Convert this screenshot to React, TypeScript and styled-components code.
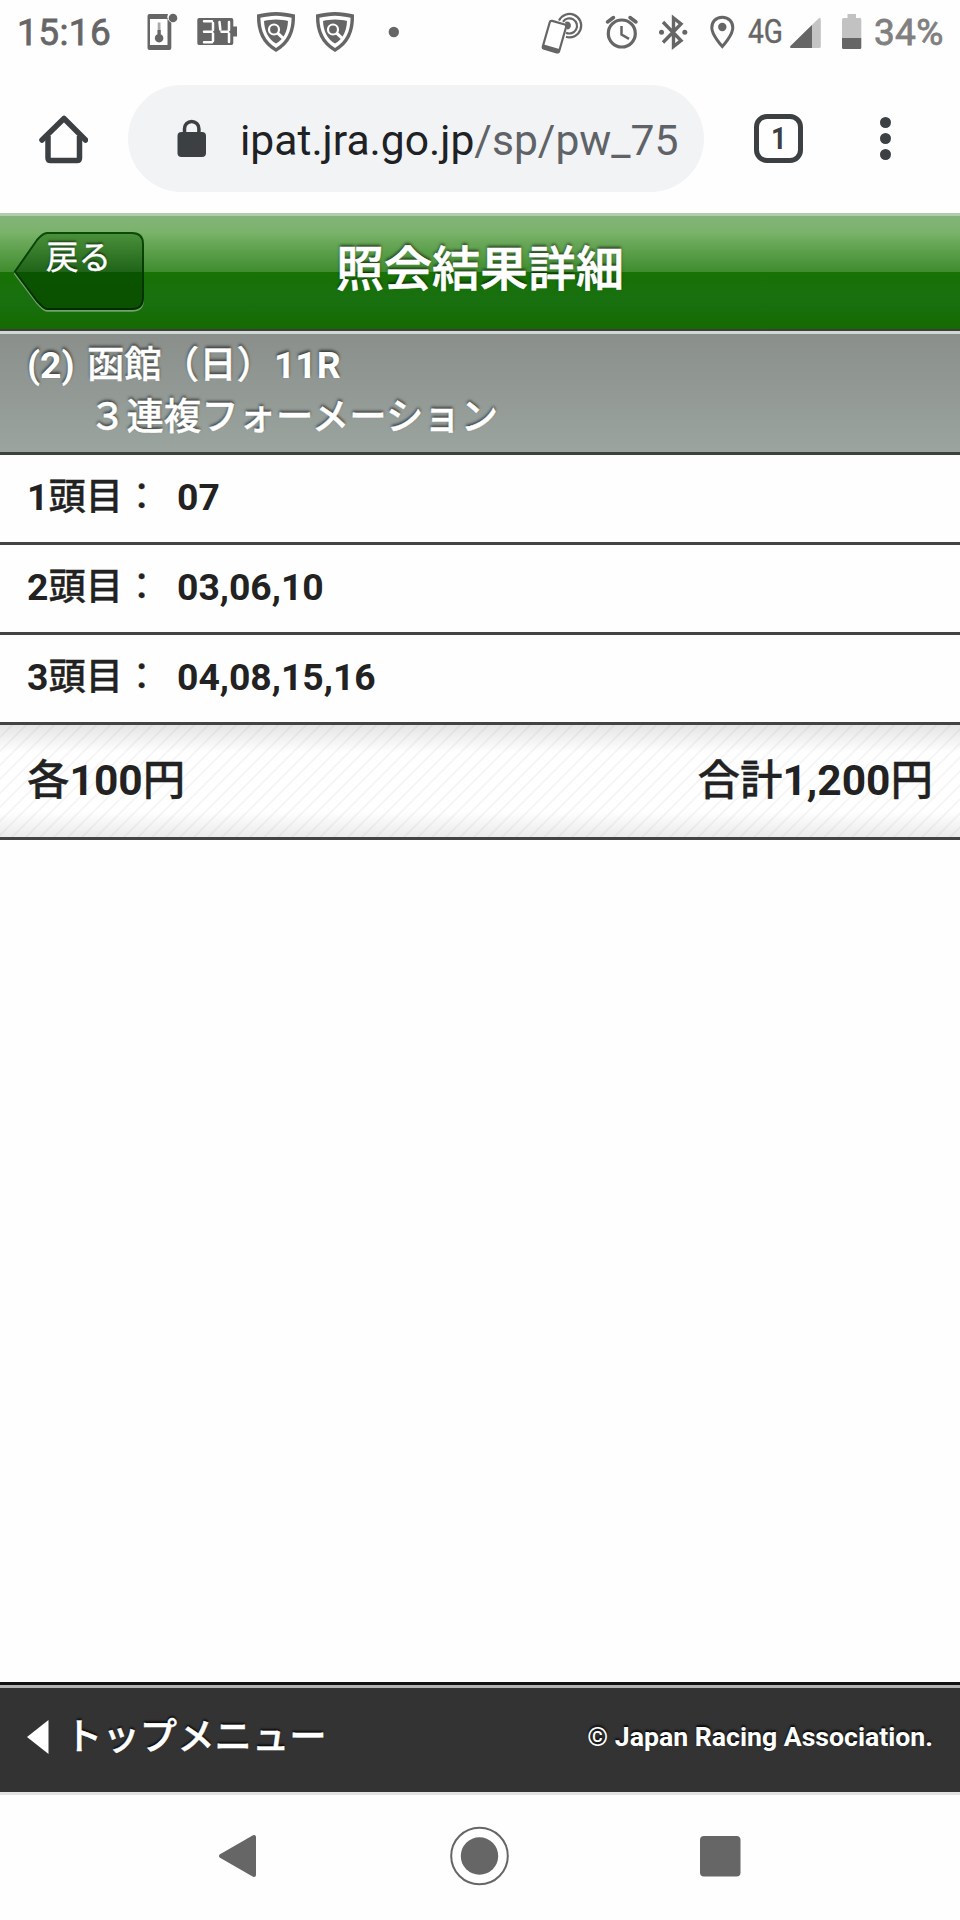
import React from "react";
import styled, { createGlobalStyle, css } from "styled-components";

const GlobalStyle = createGlobalStyle`
  * { box-sizing: border-box; }
  body { margin: 0; background: #fdfdfd; }
`;

const latin = `Roboto, "Noto Sans CJK JP", sans-serif`;

const Screen = styled.div`
  width: 960px;
  height: 1920px;
  display: flex;
  flex-direction: column;
  background: #fefefe;
  font-family: ${latin};
  color: #222;
  overflow: hidden;
`;

/* Japanese text: sits on the Latin baseline without growing the line */
const Jp = styled.span<{ $stroke?: number; $light?: boolean }>`
  font-family: "Noto Sans CJK JP", sans-serif;
  font-weight: ${(p) => (p.$light ? 400 : 500)};
  line-height: 0;
  ${(p) => p.$stroke && css`-webkit-text-stroke: ${p.$stroke}px currentColor;`}
`;

/* ---------- status bar ---------- */

const StatusBar = styled.header`
  height: 66px;
  display: flex;
  align-items: flex-start;
  padding-top: 10px;
  color: #666;
`;

const Clock = styled.span`
  flex: none;
  width: 147px;
  padding-left: 17px;
  font-size: 37px;
  line-height: 46px;
  letter-spacing: 0.4px;
  -webkit-text-stroke: 0.8px currentColor;
`;

const BatteryText = styled.span`
  margin-left: 12px;
  font-size: 37px;
  line-height: 46px;
  letter-spacing: 0.3px;
  color: #808080;
  -webkit-text-stroke: 0.8px currentColor;
`;

const Glyph = styled.svg<{ $gap?: number }>`
  flex: none;
  display: block;
  overflow: visible;
  margin-left: ${(p) => p.$gap ?? 0}px;
`;

const ShieldIcon = ({ gap }: { gap: number }) => (
  <Glyph $gap={gap} width="40" height="44" viewBox="0 0 40 44">
    <path d="M20 2 C26 2.2 32 3 39 4.6 C39.6 22 34 34 20 42 C6 34 .4 22 1 4.6 C8 3 14 2.2 20 2Z" fill="#666" />
    <path d="M20 5.8 C26 6 30 6.6 35.6 7.8 C35.4 21.5 31 31 20 38 C9 31 4.6 21.5 4.4 7.8 C10 6.6 14 6 20 5.8Z" fill="#fff" />
    <path d="M20 9.5 C25 9.6 28 10 32 10.9 C31.6 21 28 28.5 20 33.6 C12 28.5 8.4 21 8 10.9 C12 10 15 9.6 20 9.5Z" fill="#666" />
    <circle cx="18" cy="19.5" r="5" fill="none" stroke="#fff" strokeWidth="2.2" />
    <path d="M21.7 23.2 L27 28.2" stroke="#fff" strokeWidth="3" />
  </Glyph>
);

const Status = () => (
  <StatusBar>
    <Clock>15:16</Clock>
    <Glyph width="31" height="44" viewBox="147 10 31 44">
      <path d="M149.5 14 H168 A6.5 6.5 0 0 0 171.3 22.8 V48 Q171.3 50 169.5 50 H149.5 Q147.5 50 147.5 48 V16 Q147.5 14 149.5 14Z" fill="#666" />
      <rect x="150" y="19" width="17.5" height="26" fill="#fff" />
      <path d="M157.7 22.5 h2.8 v11 h-2.8z" fill="#aaa" />
      <path d="M157.5 30 h3.2 v4.2 a4.3 4.3 0 1 1 -3.2 0z" fill="#666" />
      <circle cx="173" cy="18" r="4.3" fill="#666" />
    </Glyph>
    <Glyph $gap={19} width="42" height="44" viewBox="197 10 42 44">
      <path d="M199 18 H231.5 Q233.3 18 233.3 20 V26.5 H237 V36.5 H233.3 V43 Q233.3 45 231.5 45 H199 Q197.3 45 197.3 43 V20 Q197.3 18 199 18Z" fill="#666" />
      <g stroke="#fff" strokeWidth="2.5" strokeLinecap="round">
        <path d="M204 21.3 H212 M204 31.8 H212 M204 42.3 H212 M213 23 V30 M213 33.5 V41" />
        <path d="M219.5 22 L220.3 29.5 M221.5 31.8 H228 M229 22 V30 M229 33.5 V42" />
      </g>
    </Glyph>
    <ShieldIcon gap={17} />
    <ShieldIcon gap={19} />
    <Glyph $gap={33} width="12" height="44" viewBox="388 10 12 44">
      <circle cx="393.8" cy="32" r="5.2" fill="#666" />
    </Glyph>
    <Glyph $gap={141} width="44" height="44" viewBox="541.5 10 44 44" fill="none">
      <g stroke="#666" strokeWidth="2.2">
        <path d="M559.5 20.5 A11.7 11.7 0 1 1 566.5 36.8" />
        <path d="M563.5 21.8 A7.6 7.6 0 1 1 566.5 32.7" />
      </g>
      <path d="M565.5 22 A4 4 0 1 1 567.5 29.5Z" fill="#666" />
      <g transform="rotate(16 554.5 36.5)">
        <rect x="546.5" y="22" width="17" height="29" rx="2" fill="#fff" stroke="#666" strokeWidth="2.2" />
        <rect x="546" y="47" width="18" height="4.5" rx="1" fill="#666" />
      </g>
    </Glyph>
    <Glyph $gap={20} width="33" height="44" viewBox="605 10 33 44" fill="none" stroke="#666">
      <circle cx="621.8" cy="33.5" r="13.5" strokeWidth="3.2" />
      <path d="M621.5 26 V34.5 L629 38.8" strokeWidth="2.5" />
      <path d="M607.5 22 L613.5 17.5 M636 22 L630 17.5" strokeWidth="3.5" strokeLinecap="round" />
    </Glyph>
    <Glyph $gap={20} width="31" height="44" viewBox="658 10 31 44" fill="none" stroke="#666">
      <path d="M663 22 L681 40.5 L673.5 46.5 V18 L681 24 L663 42.5" strokeWidth="3.4" />
      <circle cx="661.5" cy="32.3" r="2.5" fill="#666" stroke="none" />
      <circle cx="684.8" cy="32.3" r="2.5" fill="#666" stroke="none" />
    </Glyph>
    <Glyph $gap={21} width="25" height="44" viewBox="710 10 25 44">
      <path d="M722.3 17.3 C715.5 17.3 711.8 22 711.8 27.7 C711.8 35 722.3 46.5 722.3 46.5 C722.3 46.5 732.8 35 732.8 27.7 C732.8 22 729 17.3 722.3 17.3Z" fill="none" stroke="#666" strokeWidth="3" />
      <circle cx="722.3" cy="27" r="4.2" fill="#666" />
    </Glyph>
    <Glyph $gap={10} width="42" height="44" viewBox="745 10 42 44">
      <text x="748" y="43.2" fontSize="33" fill="#666" stroke="#666" strokeWidth=".4" fontFamily="Roboto, sans-serif" textLength="35" lengthAdjust="spacingAndGlyphs">4G</text>
    </Glyph>
    <Glyph $gap={3} width="32" height="44" viewBox="790 10 32 44">
      <path d="M791.5 48 Q789.5 48 790.5 46 L818.5 18.5 Q820.8 17 820.8 19.5 V46.5 Q820.8 48 819 48Z" fill="#c4c4c4" />
      <path d="M791.5 48 Q789.5 48 790.5 46 L812 25 V48Z" fill="#666" />
    </Glyph>
    <Glyph $gap={20} width="20" height="44" viewBox="842 10 20 44">
      <path d="M847.5 14 H856 V18 H860 Q861.3 18 861.3 20 V38 H842 V20 Q842 18 843.5 18 H847.5Z" fill="#c2c2c2" />
      <path d="M842 38 H861.3 V47.5 Q861.3 49 860 49 H843.5 Q842 49 842 47.5Z" fill="#666" />
    </Glyph>
    <BatteryText>34%</BatteryText>
  </StatusBar>
);

/* ---------- browser toolbar ---------- */

const Toolbar = styled.div`
  height: 147px;
  display: flex;
  align-items: center;
  padding: 0 60px 2px 39px;
`;

const AddressBar = styled.div`
  width: 576px;
  height: 107px;
  margin: 0 50px 0 40px;
  padding: 0 26px 0 49px;
  border-radius: 54px;
  background: #f1f3f4;
  display: flex;
  align-items: center;
`;

const Url = styled.div`
  flex: 1;
  margin: 3px 0 0 33px;
  overflow: hidden;
  white-space: nowrap;
  font-size: 42.6px;
  line-height: 56px;
  color: #5f6368;
`;

const Host = styled.span`
  color: #202124;
`;

const TabCount = styled.div`
  width: 49px;
  height: 49px;
  border: 5.5px solid #3c4043;
  border-radius: 13px;
  display: flex;
  align-items: center;
  justify-content: center;
  font-size: 31px;
  font-weight: 700;
  color: #3c4043;
  span { transform: scaleX(0.88); }
`;

const MenuDots = styled.div`
  margin-left: 77px;
  display: flex;
  flex-direction: column;
  gap: 5px;
`;

const Dot = styled.i`
  width: 11px;
  height: 11px;
  border-radius: 50%;
  background: #3c4043;
`;

/* ---------- page ---------- */

const PageHeader = styled.div`
  height: 118px;
  display: grid;
  grid-template-columns: 336px auto 336px;
  border-top: 3px solid #b0ccab;
  border-bottom: 2px solid #3d3d3d;
  background: linear-gradient(#82b37a 0, #7bb36b 16px, #67a656 28px, #3f8c2e 56px, #187204 56px, #187010 84px, #156b00 100%);
  color: #fff;
`;

const BackButton = styled.a`
  position: relative;
  width: 132px;
  height: 80px;
  margin: 16px 0 0 13px;
  padding-left: 33px;
  font-size: 32.5px;
  line-height: 52px;
  text-shadow: 0 -2px 2px rgba(0, 0, 0, 0.5);
  span { position: relative; }
`;

const BackShape = styled.svg`
  position: absolute;
  left: 0;
  top: 0;
`;

const Title = styled.h1`
  margin: 0;
  font-size: 48px;
  line-height: 107px;
  white-space: nowrap;
  text-shadow: 0 -2px 3px rgba(0, 0, 0, 0.6);
`;

const RaceHeading = styled.div`
  height: 124px;
  border-top: 3px solid #d0d8d4;
  border-bottom: 3px solid #3f3f3f;
  padding: 6px 27px 0;
  background: linear-gradient(#8a8f8b, #9ba49f);
  color: #fff;
  font-size: 37.4px;
  line-height: 51px;
  font-weight: 700;
  text-shadow: 0 -2px 3px rgba(0, 0, 0, 0.6);
`;

const HeadingLine = styled.div<{ $indent?: number }>`
  padding-left: ${(p) => p.$indent ?? 0}px;
  white-space: pre;
  height: 52px;
  word-spacing: 3px;
`;

const PickRow = styled.div`
  height: 90px;
  padding: 15px 27px 0;
  border-bottom: 3px solid #434343;
  display: flex;
  font-size: 37.3px;
  line-height: 54px;
  font-weight: 700;
`;

const PickLabel = styled.div`
  width: 150px;
  white-space: nowrap;
`;

const TotalRow = styled.div`
  height: 115px;
  padding: 0 27px;
  border-bottom: 3px solid #434343;
  display: flex;
  justify-content: space-between;
  font-size: 42.5px;
  line-height: 112px;
  font-weight: 700;
  background:
    linear-gradient(rgba(0, 0, 0, 0.1), transparent 28px, transparent 86px, rgba(0, 0, 0, 0.08)),
    repeating-linear-gradient(135deg, #fff 0 7.4px, #f5f5f5 8px 9.3px, #fff 9.9px);
`;

const Spacer = styled.main`
  flex: 1;
`;

const Footer = styled.footer`
  height: 113px;
  border-top: 3px solid #111;
  border-bottom: 3px solid #e2e2e2;
  box-shadow: inset 0 3px #b3b3b3;
  background: #333;
  color: #fff;
  display: flex;
  align-items: center;
  padding: 0 27px 3px;
  text-shadow: 0 -2px 2px rgba(0, 0, 0, 0.8);
`;

const TopMenu = styled.a`
  display: flex;
  align-items: center;
  gap: 16px;
  font-size: 37.4px;
`;

const MenuLabel = styled.div`
  line-height: 50px;
`;

const Copyright = styled.small`
  margin-left: auto;
  font-size: 26.65px;
  font-weight: 700;
`;

const NavBar = styled.nav`
  height: 125px;
  display: flex;
  align-items: center;
  gap: 191px;
  padding: 0 0 3px 218px;
  svg { flex: none; }
`;

const picks = [
  { place: "1", horses: "07" },
  { place: "2", horses: "03,06,10" },
  { place: "3", horses: "04,08,15,16" },
];

export default function App() {
  return (
    <Screen>
      <GlobalStyle />
      <Status />
      <Toolbar>
        <svg width="49" height="50" viewBox="0 0 49 50" fill="none" stroke="#3c4043" strokeWidth="5.5">
          <path d="M3 26 L25 4.5 L46.5 26" strokeLinecap="round" strokeLinejoin="round" />
          <path d="M9 22 V44 Q9 46.5 11.5 46.5 H38 Q40.5 46.5 40.5 44 V22" />
        </svg>
        <AddressBar>
          <svg width="30" height="40" viewBox="0 0 30 40">
            <path d="M7.5 15 V9.7 a7.2 7.2 0 0 1 14.4 0 V15" fill="none" stroke="#3c4043" strokeWidth="3.5" />
            <rect x=".5" y="13" width="28.5" height="25" rx="4" fill="#3c4043" />
          </svg>
          <Url><Host>ipat.jra.go.jp</Host>/sp/pw_75</Url>
        </AddressBar>
        <TabCount><span>1</span></TabCount>
        <MenuDots><Dot /><Dot /><Dot /></MenuDots>
      </Toolbar>

      <PageHeader>
        <BackButton>
          <BackShape width="132" height="80" viewBox="0 0 132 80">
            <defs>
              <linearGradient id="face" x1="0" y1="0" x2="0" y2="1">
                <stop offset="0" stopColor="#4b903a" />
                <stop offset=".51" stopColor="#20641a" />
                <stop offset=".51" stopColor="#0a5400" />
                <stop offset="1" stopColor="#0a5000" />
              </linearGradient>
              <linearGradient id="edge" x1="0" y1="0" x2="0" y2="1">
                <stop offset="0" stopColor="#0b4a08" />
                <stop offset="1" stopColor="#042c00" />
              </linearGradient>
            </defs>
            <path d="M2 41 L24 10 Q30 2.5 34 2.5 H119 Q130 2.5 130 13 V67 Q130 78 119 78 H34 Q31 78 24 70Z" transform="translate(0 .8)" fill="none" stroke="#6fa566" strokeWidth="2" />
            <path d="M2 39.5 L24 8 Q30 1 34 1 H119 Q130 1 130 12 V66 Q130 77 119 77 H34 Q31 77 24 69Z" fill="url(#face)" stroke="url(#edge)" strokeWidth="2" />
          </BackShape>
          <Jp $light $stroke={0.4}>戻る</Jp>
        </BackButton>
        <Title><Jp $stroke={0.6}>照会結果詳細</Jp></Title>
      </PageHeader>

      <RaceHeading>
        <HeadingLine>(2) <Jp $stroke={0.4}>函館（日）</Jp>11R</HeadingLine>
        <HeadingLine $indent={62}><Jp $stroke={0.4}>３連複フォーメーション</Jp></HeadingLine>
      </RaceHeading>

      {picks.map((p) => (
        <PickRow key={p.place}>
          <PickLabel>{p.place}<Jp $stroke={0.3}>頭目</Jp><Jp $light $stroke={0.3}>：</Jp></PickLabel>
          <span>{p.horses}</span>
        </PickRow>
      ))}

      <TotalRow>
        <span><Jp $stroke={0.3}>各</Jp>100<Jp $stroke={0.3}>円</Jp></span>
        <span><Jp $stroke={0.3}>合計</Jp>1,200<Jp $stroke={0.3}>円</Jp></span>
      </TotalRow>

      <Spacer />

      <Footer>
        <TopMenu>
          <svg width="22" height="36" viewBox="0 0 22 36"><path d="M0 18 L21.5 1 V35Z" fill="#fff" /></svg>
          <MenuLabel><Jp $stroke={0.4}>トップメニュー</Jp></MenuLabel>
        </TopMenu>
        <Copyright>© Japan Racing Association.</Copyright>
      </Footer>

      <NavBar>
        <svg width="38" height="44" viewBox="0 0 38 44"><path d="M3 22 L36 3 V41Z" fill="#666" stroke="#666" strokeWidth="4" strokeLinejoin="round" /></svg>
        <svg width="62" height="60" viewBox="0 0 62 60"><circle cx="32.5" cy="30" r="28.3" fill="none" stroke="#666" strokeWidth="2" /><circle cx="32.5" cy="30" r="18.7" fill="#666" /></svg>
        <svg width="41" height="41" viewBox="0 0 41 41"><rect width="40.5" height="40.5" rx="4" fill="#666" /></svg>
      </NavBar>
    </Screen>
  );
}
